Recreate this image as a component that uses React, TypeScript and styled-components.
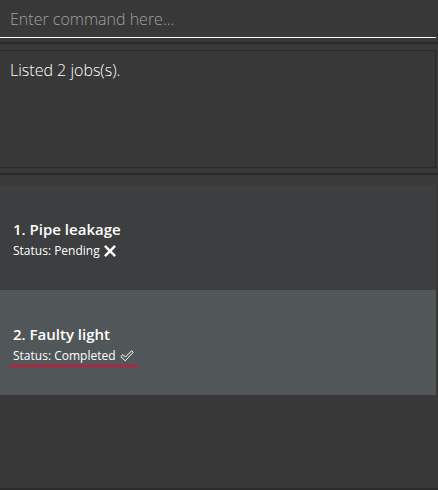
import styled, { createGlobalStyle } from "styled-components";

const GlobalStyle = createGlobalStyle`
  html, body {
    margin: 0;
    padding: 0;
    background: #383838;
  }
  body {
    font-family: "Open Sans", "Noto Sans", sans-serif;
  }
`;

const Window = styled.div`
  display: flex;
  flex-direction: column;
  width: 438px;
  height: 490px;
  background: #383838;
  overflow: hidden;
`;

const CommandBox = styled.div`
  display: flex;
  align-items: center;
  height: 38px;
  margin-right: 2px;
  padding: 0 10px;
  border-bottom: 1px solid #ffffff;
  box-sizing: border-box;
`;

const CommandInput = styled.input`
  flex: 1;
  background: transparent;
  border: none;
  outline: none;
  padding: 0;
  color: #ffffff;
  font-family: "Open Sans", sans-serif;
  font-weight: 300;
  font-size: 16px;

  &::placeholder {
    color: #a0a0a0;
  }
`;

const Divider = styled.div<{ $top: number; $bottom: number }>`
  height: 2px;
  background: #2a2a2a;
  margin: ${(p) => p.$top}px 0 ${(p) => p.$bottom}px;
`;

const ResultBox = styled.div`
  height: 118px;
  margin-right: 2px;
  padding: 8px 10px;
  border: 1px solid #2a2a2a;
  border-left: none;
  box-sizing: border-box;
  color: #ffffff;
  font-weight: 300;
  font-size: 16px;
`;

const ListPanel = styled.div`
  flex: 1;
  display: flex;
  flex-direction: column;
  padding-top: 10px;
  background: linear-gradient(#3a3a3a 0 10px, #383838 10px);
  border-bottom: 2px solid #2a2a2a;
`;

const Card = styled.div<{ $selected?: boolean }>`
  display: flex;
  flex-direction: column;
  justify-content: center;
  height: 105px;
  margin-right: 2px;
  padding: 6px 13px 0;
  box-sizing: border-box;
  background: ${(p) => (p.$selected ? "#515658" : "#3c3e3f")};
`;

const Title = styled.div`
  color: #ffffff;
  font-weight: 600;
  font-size: 15px;
  line-height: 20px;
`;

const Status = styled.div<{ $underline?: boolean }>`
  display: inline-flex;
  align-items: center;
  align-self: flex-start;
  gap: 4px;
  margin-top: 3px;
  margin-left: -4px;
  padding: 0 4px 1px;
  color: #ffffff;
  font-size: 12px;
  line-height: 17px;
  border-bottom: 2px solid
    ${(p) => (p.$underline ? "#d4143a" : "transparent")};
  border-radius: 1px;
`;

const Cross = () => (
  <svg width="12" height="12" viewBox="0 0 12 12">
    <path
      d="M1.8 1.8 L10.2 10.2 M10.2 1.8 L1.8 10.2"
      stroke="#ffffff"
      strokeWidth="2.4"
      strokeLinecap="square"
    />
  </svg>
);

const Check = () => (
  <svg width="14" height="12" viewBox="0 0 14 12">
    <path
      d="M0.8 6.6 L3 4.6 L5.3 7.1 L11.6 0.8 L13.2 2.2 L5.3 10.8 Z"
      fill="none"
      stroke="#ffffff"
      strokeWidth="1"
      strokeLinejoin="round"
    />
  </svg>
);

export default function App() {
  return (
    <Window>
      <GlobalStyle />
      <CommandBox>
        <CommandInput placeholder="Enter command here..." />
      </CommandBox>
      <Divider $top={4} $bottom={6} />
      <ResultBox>Listed 2 jobs(s).</ResultBox>
      <Divider $top={5} $bottom={0} />
      <ListPanel>
        <Card>
          <Title>1. Pipe leakage</Title>
          <Status>
            Status: Pending <Cross />
          </Status>
        </Card>
        <Card $selected>
          <Title>2. Faulty light</Title>
          <Status $underline>
            Status: Completed <Check />
          </Status>
        </Card>
      </ListPanel>
    </Window>
  );
}
